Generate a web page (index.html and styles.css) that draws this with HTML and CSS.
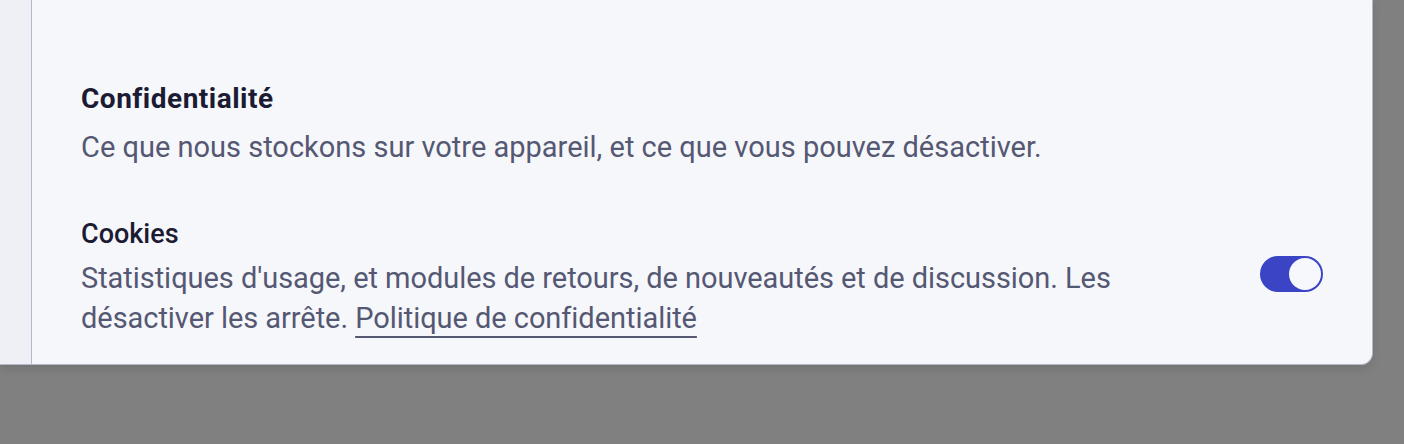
FILE: index.html
```html
<!DOCTYPE html>
<html lang="fr">
<head>
<meta charset="utf-8">
<title>Confidentialité</title>
<link rel="stylesheet" href="styles.css">
</head>
<body>
<div class="panel">
  <aside class="sidebar"></aside>
  <main class="content">
    <section class="section">
      <h2 class="section-title">Confidentialité</h2>
      <p class="section-desc">Ce que nous stockons sur votre appareil, et ce que vous pouvez désactiver.</p>
    </section>
    <div class="setting-row">
      <div class="setting-text">
        <h3 class="setting-title">Cookies</h3>
        <p class="setting-desc">Statistiques d'usage, et modules de retours, de nouveautés et de discussion. Les désactiver les arrête. <a class="link" href="#">Politique de confidentialité</a></p>
      </div>
      <span class="toggle" role="switch" aria-checked="true"><span class="knob"></span></span>
    </div>
  </main>
</div>
</body>
</html>
```

FILE: styles.css
```css
html, body {
  margin: 0;
  padding: 0;
}
body {
  background: #808080;
  width: 1404px;
  height: 444px;
  overflow: hidden;
  font-family: Roboto, "Noto Sans", sans-serif;
}
.panel {
  display: flex;
  width: 1372px;
  background: #f6f7fb;
  border-right: 1px solid #b6b8cb;
  border-bottom: 1px solid #b6b8cb;
  border-bottom-right-radius: 12px;
  box-shadow: 0 3px 10px rgba(0, 0, 0, 0.12);
}
.sidebar {
  width: 31px;
  flex: none;
  background: #eef0f5;
  border-right: 1px solid #b5b7cb;
}
.content {
  flex: 1;
  padding: 81px 49px 26px 49px;
}
.section-title {
  margin: 0;
  font-size: 28px;
  line-height: 36px;
  font-weight: 700;
  letter-spacing: 0.5px;
  color: #1b1c33;
}
.section-desc {
  margin: 10px 0 0 0;
  font-size: 29px;
  line-height: 40px;
  color: #555872;
}
.setting-row {
  display: flex;
  align-items: center;
  margin-top: 49px;
}
.setting-text {
  flex: 1;
  max-width: 1100px;
}
.setting-title {
  margin: 0;
  font-size: 27px;
  line-height: 36px;
  font-weight: 500;
  color: #1b1c33;
}
.setting-desc {
  margin: 6px 0 0 0;
  font-size: 29px;
  line-height: 40px;
  letter-spacing: -0.05px;
  color: #555872;
}
.link {
  color: #555872;
  text-decoration: underline;
  text-decoration-thickness: 2px;
  text-underline-offset: 8px;
}
.toggle {
  margin-left: auto;
  margin-bottom: 6px;
  flex: none;
  box-sizing: border-box;
  width: 63px;
  height: 36px;
  border-radius: 18px;
  background: #3a44c4;
  display: flex;
  align-items: center;
  justify-content: flex-end;
  padding: 2px;
}
.knob {
  width: 32px;
  height: 32px;
  border-radius: 50%;
  background: #f7f8fc;
}
```
